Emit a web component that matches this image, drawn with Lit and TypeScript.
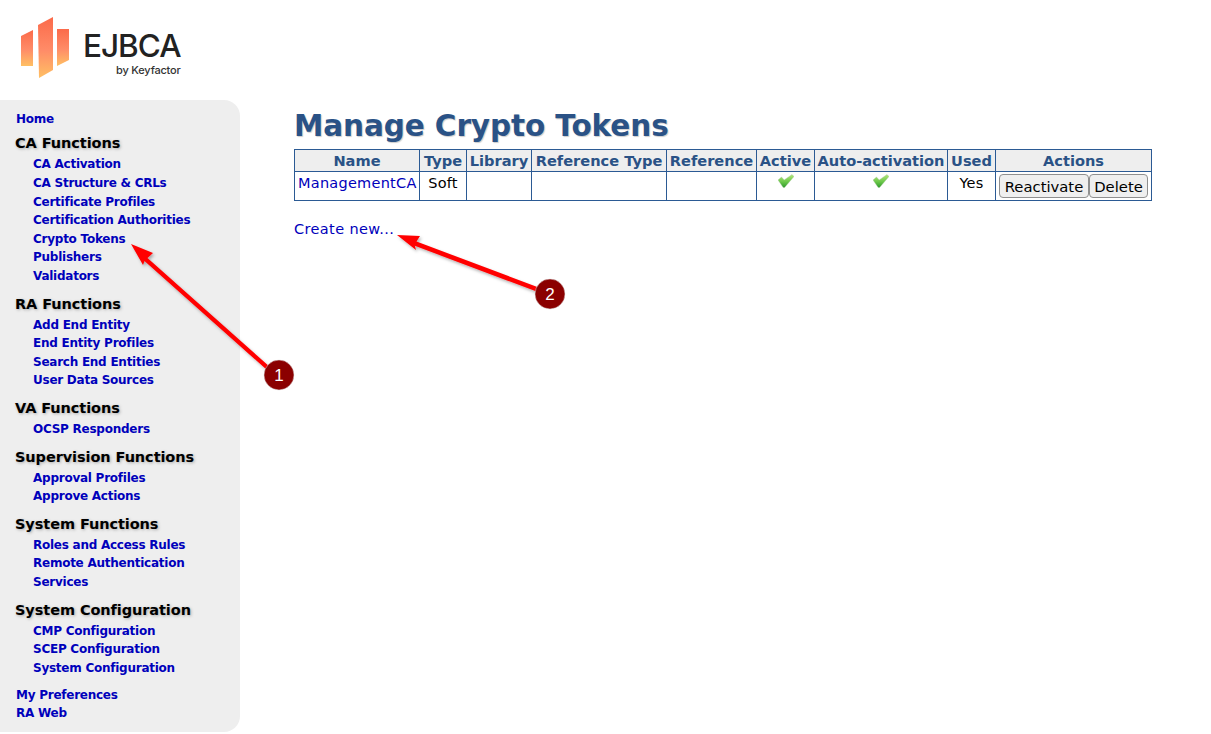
import { LitElement, html, css, svg } from "lit";
import { customElement } from "lit/decorators.js";

const groups: { title: string; items: string[] }[] = [
  { title: "CA Functions", items: ["CA Activation", "CA Structure & CRLs", "Certificate Profiles", "Certification Authorities", "Crypto Tokens", "Publishers", "Validators"] },
  { title: "RA Functions", items: ["Add End Entity", "End Entity Profiles", "Search End Entities", "User Data Sources"] },
  { title: "VA Functions", items: ["OCSP Responders"] },
  { title: "Supervision Functions", items: ["Approval Profiles", "Approve Actions"] },
  { title: "System Functions", items: ["Roles and Access Rules", "Remote Authentication", "Services"] },
  { title: "System Configuration", items: ["CMP Configuration", "SCEP Configuration", "System Configuration"] },
];

const check = html`<svg class="check" width="16" height="14" viewBox="0 0 16 14">
  <defs><linearGradient id="cg" x1="0" y1="0" x2="0" y2="1"><stop offset="0" stop-color="#b4e67c"/><stop offset=".55" stop-color="#6cc84a"/><stop offset="1" stop-color="#2f9a2c"/></linearGradient></defs>
  <path d="M0 6 L3.5 3 L6.2 6 L14 .5 L16 2.5 L6.6 13.5 L5.2 13.5 Z" fill="url(#cg)" stroke="#a9c8a0" stroke-width=".4"/>
</svg>`;

@customElement("app-root")
export class AppRoot extends LitElement {
  static styles = css`
    :host { display: block; width: 1211px; height: 734px; position: relative; overflow: hidden; background: #fff;
      font-family: "DejaVu Sans", Verdana, sans-serif; }
    a { text-decoration: none; color: #0000bb; }
    .logo { height: 100px; display: flex; align-items: flex-start; position: relative; }
    .logo svg { display: block; flex: none; }
    .wordmark { display: flex; flex-direction: column; align-items: flex-end; margin: 27px 0 0 10px; font-family: Inter, sans-serif; color: #222; }
    .wordmark b { font-weight: 500; font-size: 31.5px; line-height: 38px; letter-spacing: -1px; }
    .wordmark span { font-weight: 500; font-size: 11px; line-height: 11px; letter-spacing: -.2px; color: #333; }
    .page { display: flex; align-items: flex-start; }
    nav { width: 240px; height: 632px; box-sizing: border-box; background: #eee; border-radius: 0 16px 16px 0; padding: 10.1px 0 0 16px; flex: none; }
    nav a { display: block; font-weight: 700; font-size: 12px; letter-spacing: -.25px; line-height: 18.6px; }
    nav .sub a { padding-left: 17px; }
    nav h3 { margin: 0 0 0 -1px; font-size: 14.5px; letter-spacing: -.08px; font-weight: 700; line-height: 19px; padding-bottom: 2px; color: #000;
      text-shadow: 1px 1px 3px #aaa; }
    nav .group { padding-top: 5.8px; margin-bottom: 3.2px; }
    nav .foot { margin-top: 8.6px; }
    main { flex: none; width: 858px; margin-left: 54px; }
    h1 { margin: 3px 0 0; font-size: 29.5px; letter-spacing: -.1px; line-height: 46px; font-weight: 700; color: #2a5286; text-shadow: 1px 1px 1px #ccc; }
    table { border-collapse: collapse; table-layout: fixed; width: 857px; font-size: 14.5px; letter-spacing: .25px; }
    th, td { border: 1px solid #2b5a94; padding: 0; text-align: center; overflow: hidden; white-space: nowrap; }
    th { background: #eee; color: #2a5286; font-weight: 700; height: 21px; font-size: 14.6px; letter-spacing: 0; }
    td { height: 28px; color: #000; }
    td.name { text-align: left; padding: 3px 0 0 3px; vertical-align: top; height: 25px; }
    .c1 { width: 125px; } .c2 { width: 47px; } .c3 { width: 65px; } .c4 { width: 135px; } .c5 { width: 90px; }
    .c6 { width: 58px; } .c7 { width: 133px; } .c8 { width: 48px; } .c9 { width: 156px; }
    .top { vertical-align: top; padding-top: 3px; height: 25px; }
    .tick { vertical-align: top; padding-top: 2px; height: 26px; }
    .check { display: block; margin: 0 auto; }
    .acts { text-align: left; padding-left: 3px; }
    .acts div { display: flex; }
    button { font: inherit; font-size: 14.8px; letter-spacing: 0; height: 24px; padding: 0; box-sizing: border-box; background: #efefef; border: 1px solid #8f8f8f; border-radius: 4px; color: #000; width: 90px; }
    button + button { width: 59px; }
    .create { display: block; margin-top: 19px; font-size: 14.5px; letter-spacing: .38px; line-height: 18px; }
    .overlay { position: absolute; left: 0; top: 0; width: 1211px; height: 734px; pointer-events: none; }
    .overlay text { font-family: "Liberation Sans", sans-serif; font-size: 17px; fill: #fff; text-anchor: middle; }
  `;

  render() {
    return html`
      <div class="logo">
        <svg width="73" height="100" viewBox="0 0 73 100">
          <defs>
            <linearGradient id="lg" x1="0" y1="0" x2="0" y2="1"><stop offset="0" stop-color="#fb6a4a"/><stop offset=".55" stop-color="#ff8c68"/><stop offset="1" stop-color="#ffc064"/></linearGradient>
          </defs>
          <path d="M21 36 L33 30 V66 H21 Z" fill="url(#lg)"/>
          <path d="M38 25 L53 17 V70 L39 78 Z" fill="url(#lg)"/>
          <path d="M57 29 H69 V60 L57 66 Z" fill="url(#lg)"/>
        </svg>
        <div class="wordmark"><b>EJBCA</b><span>by Keyfactor</span></div>
      </div>
      <div class="page">
        <nav>
          <a href="#">Home</a>
          ${groups.map((g) => html`<div class="group"><h3>${g.title}</h3><div class="sub">${g.items.map((i) => html`<a href="#">${i}</a>`)}</div></div>`)}
          <div class="foot"><a href="#">My Preferences</a><a href="#">RA Web</a></div>
        </nav>
        <main>
          <h1>Manage Crypto Tokens</h1>
          <table>
            <colgroup><col class="c1"><col class="c2"><col class="c3"><col class="c4"><col class="c5"><col class="c6"><col class="c7"><col class="c8"><col class="c9"></colgroup>
            <tr><th>Name</th><th>Type</th><th>Library</th><th>Reference Type</th><th>Reference</th><th>Active</th><th>Auto-activation</th><th>Used</th><th>Actions</th></tr>
            <tr>
              <td class="name"><a href="#">ManagementCA</a></td><td class="top">Soft</td><td></td><td></td><td></td>
              <td class="tick">${check}</td><td class="tick">${check}</td><td class="top">Yes</td>
              <td class="acts"><div><button>Reactivate</button><button>Delete</button></div></td>
            </tr>
          </table>
          <a class="create" href="#">Create new...</a>
        </main>
      </div>
      <svg class="overlay" viewBox="0 0 1211 734">
        <defs><filter id="ds" x="-20%" y="-20%" width="140%" height="140%"><feDropShadow dx="1.5" dy="2" stdDeviation="1.5" flood-color="#000" flood-opacity=".3"/></filter></defs>
        ${svg`<g filter="url(#ds)">
          <path d="M131 244 L153 253 L147.5 258 L279 375 L276 378 L144.5 261 L143 265 Z" fill="#f00"/>
          <path d="M397 235 L420 236 L416.5 241.5 L552 292.5 L550 296.5 L414.8 245.8 L416 250 Z" fill="#f00"/>
        </g>
        <circle cx="279" cy="375" r="15" fill="#8b0000" stroke="#ddd" stroke-width=".5"/>
        <text x="279" y="381">1</text>
        <circle cx="550" cy="294" r="15" fill="#8b0000" stroke="#ddd" stroke-width=".5"/>
        <text x="550" y="300">2</text>`}
      </svg>
    `;
  }
}
